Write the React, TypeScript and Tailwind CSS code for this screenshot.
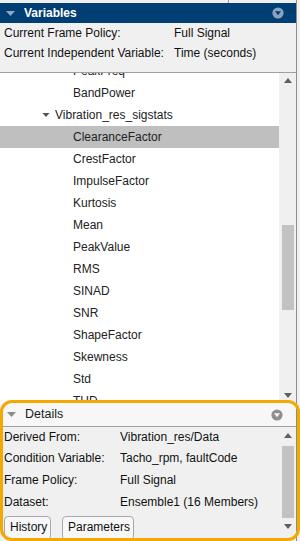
import React from 'react';

const TREE_ITEMS: { label: string; depth: 0 | 1; selected?: boolean }[] = [
  { label: 'PeakFreq', depth: 1 },
  { label: 'BandPower', depth: 1 },
  { label: 'Vibration_res_sigstats', depth: 0 },
  { label: 'ClearanceFactor', depth: 1, selected: true },
  { label: 'CrestFactor', depth: 1 },
  { label: 'ImpulseFactor', depth: 1 },
  { label: 'Kurtosis', depth: 1 },
  { label: 'Mean', depth: 1 },
  { label: 'PeakValue', depth: 1 },
  { label: 'RMS', depth: 1 },
  { label: 'SINAD', depth: 1 },
  { label: 'SNR', depth: 1 },
  { label: 'ShapeFactor', depth: 1 },
  { label: 'Skewness', depth: 1 },
  { label: 'Std', depth: 1 },
  { label: 'THD', depth: 1 },
];

const DETAILS = [
  ['Derived From:', 'Vibration_res/Data'],
  ['Condition Variable:', 'Tacho_rpm, faultCode'],
  ['Frame Policy:', 'Full Signal'],
  ['Dataset:', 'Ensemble1 (16 Members)'],
];

function Caret({ color, className = '' }: { color: string; className?: string }) {
  return (
    <svg width="9" height="5" viewBox="0 0 9 5" className={className}>
      <path d="M0 0 H9 L4.5 5 Z" fill={color} />
    </svg>
  );
}

function CircleMenu({ ring, inner }: { ring: string; inner: string }) {
  return (
    <svg width="12" height="12" viewBox="0 0 12 12">
      <circle cx="6" cy="6" r="5.6" fill={ring} />
      <path d="M3 4.3 H9 L6 8.3 Z" fill={inner} />
    </svg>
  );
}

function ArrowUp() {
  return (
    <svg width="8" height="5" viewBox="0 0 8 5">
      <path d="M0 5 H8 L4 0 Z" fill="#606060" />
    </svg>
  );
}

function ArrowDown() {
  return (
    <svg width="8" height="5" viewBox="0 0 8 5">
      <path d="M0 0 H8 L4 5 Z" fill="#606060" />
    </svg>
  );
}

export default function App() {
  return (
    <div
      className="relative w-[300px] h-[541px] overflow-hidden bg-[#f0f0f0] text-[12px] text-[#111]"
      style={{ fontFamily: '"Liberation Sans", Arial, sans-serif' }}
    >
      <div className="flex h-full w-[297px] flex-col border-r border-[#8c8c8c]">
        <div className="relative h-[3px] shrink-0">
          <span className="absolute left-[228px] top-0 h-[3px] w-px bg-[#9a9a9a]" />
        </div>

        {/* Variables header */}
        <div className="flex h-[20px] shrink-0 items-center bg-[#013e73] pl-[6px] pr-[12px]">
          <Caret color="#8ea8c6" />
          <span className="ml-[9px] flex-1 font-bold text-white">Variables</span>
          <CircleMenu ring="#8aa3c1" inner="#013e73" />
        </div>

        {/* Current policy info */}
        <div className="flex h-[49px] shrink-0 flex-col">
          <div className="flex h-[19px] items-center pl-[4px]">
            <span className="w-[170px]">Current Frame Policy:</span>
            <span>Full Signal</span>
          </div>
          <div className="flex h-[22px] items-center pl-[4px]">
            <span className="w-[170px]">Current Independent Variable:</span>
            <span>Time (seconds)</span>
          </div>
        </div>

        {/* Tree */}
        <div className="flex h-[331px] shrink-0 border-t border-[#a0a0a0] bg-white">
          <div className="flex-1 overflow-hidden">
            <div className="-mt-[13px] flex flex-col">
              {TREE_ITEMS.map((it) => (
                <div
                  key={it.label}
                  className={`flex h-[22px] items-center text-[#222] ${
                    it.selected ? 'bg-[#bfbfbf]' : ''
                  } ${it.depth === 0 ? 'pl-[42px]' : 'pl-[73px]'}`}
                >
                  {it.depth === 0 && <Caret color="#555" className="mr-[5px] h-[4px] w-[8px]" />}
                  {it.label}
                </div>
              ))}
            </div>
          </div>
          <div className="flex w-[17px] flex-col items-center bg-[#f0f0f0]">
            <div className="flex h-[15px] items-center">
              <ArrowUp />
            </div>
            <div className="mt-[137px] h-[85px] w-[12px] bg-[#c2c2c2]" />
            <div className="flex-1" />
            <div className="flex h-[15px] items-center">
              <ArrowDown />
            </div>
          </div>
        </div>

        {/* Details header */}
        <div className="flex h-[24px] shrink-0 items-center border-b border-[#a0a0a0] bg-[#f7f7f7] pl-[7px] pr-[13px]">
          <Caret color="#8c8c8c" />
          <span className="ml-[9px] flex-1 text-[12.5px] text-[#1a1a1a]">Details</span>
          <CircleMenu ring="#8f8f8f" inner="#f7f7f7" />
        </div>

        {/* Details body */}
        <div className="flex flex-1">
          <div className="flex flex-1 flex-col pl-[4px]">
            {DETAILS.map(([k, v], i) => (
              <div
                key={k}
                className={`flex items-center ${i === 0 ? 'h-[20px]' : 'h-[22px]'}`}
              >
                <span className="w-[116px]">{k}</span>
                <span>{v}</span>
              </div>
            ))}
            <div className="mt-[3px] flex gap-[11px]">
              <button className="h-[24px] w-[47px] rounded-[4px] border border-[#a8a8a8] bg-[#f7f7f7] pb-[2px] text-left pl-[5px]">
                History
              </button>
              <button className="h-[24px] w-[72px] rounded-[4px] border border-[#a8a8a8] bg-[#f7f7f7] pb-[2px] text-left pl-[5px]">
                Parameters
              </button>
            </div>
          </div>
          <div className="flex w-[17px] flex-col items-center">
            <div className="flex h-[16px] items-center">
              <ArrowUp />
            </div>
            <div className="mt-[3px] h-[72px] w-[12px] bg-[#c2c2c2]" />
            <div className="flex-1" />
            <div className="mb-[10px] flex h-[9px] items-center">
              <ArrowDown />
            </div>
          </div>
        </div>
      </div>

      {/* highlight annotation */}
      <div className="pointer-events-none absolute left-0 top-[400px] h-[141px] w-[300px] rounded-[12px] border-[3px] border-[#f5a800]" />
    </div>
  );
}
